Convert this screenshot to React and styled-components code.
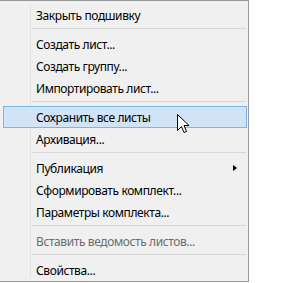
import React from 'react'
import styled, { createGlobalStyle } from 'styled-components'

const GlobalStyle = createGlobalStyle`
  html, body {
    margin: 0;
    padding: 0;
    background: #ffffff;
  }
`

const items = [
  { label: 'Закрыть подшивку' },
  { sep: true },
  { label: 'Создать лист...' },
  { label: 'Создать группу...' },
  { label: 'Импортировать лист...' },
  { sep: true },
  { label: 'Сохранить все листы', active: true },
  { label: 'Архивация...' },
  { sep: true },
  { label: 'Публикация', submenu: true },
  { label: 'Сформировать комплект...' },
  { label: 'Параметры комплекта...' },
  { sep: true },
  { label: 'Вставить ведомость листов...', disabled: true },
  { sep: true },
  { label: 'Свойства...' },
]

function Cursor() {
  return (
    <CursorWrap>
      <svg width="13" height="20" viewBox="0 0 13 20">
        <path
          d="M0.5 0.5 L0.5 16.5 L4.5 12.5 L7 18.5 L9.5 17.5 L7 11.5 L12 11.5 Z"
          fill="#fff"
          stroke="#000"
          strokeWidth="1"
        />
      </svg>
    </CursorWrap>
  )
}

function App() {
  return (
    <>
      <GlobalStyle />
      <Menu>
        {items.map((it, i) =>
          it.sep ? (
            <Separator key={i} />
          ) : (
            <Item key={i} $active={it.active} $disabled={it.disabled}>
              <span>{it.label}</span>
              {it.submenu && <Arrow />}
              {it.active && <Cursor />}
            </Item>
          )
        )}
      </Menu>
    </>
  )
}

const Menu = styled.div`
  width: 248px;
  box-sizing: content-box;
  border-top: 1px solid #979797;
  border-right: 1px solid #979797;
  border-bottom: 1px solid #979797;
  padding: 3px 0 0 0;
  background-color: #f0f0f0;
  background-image: linear-gradient(
    to right,
    transparent 30px,
    #e2e2e2 30px,
    #e2e2e2 31px,
    transparent 31px
  );
  background-repeat: no-repeat;
  background-size: 100% calc(100% - 6px);
  background-position: 0 3px;
  display: flex;
  flex-direction: column;
  font-family: "Segoe UI", "Noto Sans", sans-serif;
  font-size: 12px;
  letter-spacing: -0.4px;
`

const Item = styled.div`
  position: relative;
  height: 22px;
  margin: 0 1px 0 3px;
  padding-left: 32px;
  box-sizing: border-box;
  display: flex;
  align-items: center;
  border: 1px solid ${p => (p.$active ? '#7eb4ea' : 'transparent')};
  background: ${p => (p.$active ? '#d1e3f6' : 'transparent')};
  color: ${p => (p.$disabled ? '#6d6d6d' : '#000000')};
  white-space: nowrap;
`

const Separator = styled.div`
  height: 7px;
  margin: 0 2px 0 32px;
  display: flex;
  flex-direction: column;
  &::after {
    content: '';
    margin-top: 2px;
    height: 1px;
    background: #d7d7d7;
  }
`

const Arrow = styled.span`
  position: absolute;
  left: 229px;
  top: 7px;
  width: 0;
  height: 0;
  border-top: 3.5px solid transparent;
  border-bottom: 3.5px solid transparent;
  border-left: 4px solid #000;
`

const CursorWrap = styled.div`
  position: absolute;
  left: 173px;
  top: 7px;
  line-height: 0;
`

export default App
